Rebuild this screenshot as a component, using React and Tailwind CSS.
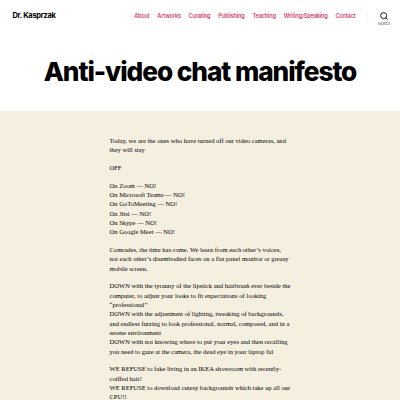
const links = ['About', 'Artworks', 'Curating', 'Publishing', 'Teaching', 'Writing/Speaking', 'Contact'];

const paragraphs = [
  ['Today, we are the ones who have turned off our video cameras, and', 'they will stay'],
  ['OFF'],
  [
    'On Zoom — NO!',
    'On Microsoft Teams — NO!',
    'On GoToMeeting — NO!',
    'On Jitsi — NO!',
    'On Skype — NO!',
    'On Google Meet — NO!',
  ],
  [
    'Comrades, the time has come. We learn from each other’s voices,',
    'not each other’s disembodied faces on a flat panel monitor or greasy',
    'mobile screen.',
  ],
  [
    'DOWN with the tyranny of the lipstick and hairbrush ever beside the',
    'computer, to adjust your looks to fit expectations of looking',
    '“professional”',
    'DOWN with the adjustment of lighting, tweaking of backgrounds,',
    'and endless futzing to look professional, normal, composed, and in a',
    'serene environment',
    'DOWN with not knowing where to put your eyes and then recalling',
    'you need to gaze at the camera, the dead eye in your laptop lid',
  ],
  [
    'WE REFUSE to fake living in an IKEA showroom with recently-',
    'coiffed hair!',
    'WE REFUSE to download cutesy backgrounds which take up all our',
    'CPU!!',
  ],
];

function Header() {
  return (
    <header className="flex h-8 items-center whitespace-nowrap pl-[12.5px]">
      <a className="text-[7.5px] font-bold leading-none tracking-[-0.32px] text-black">Dr. Kasprzak</a>
      <nav className="ml-auto flex gap-[7.8px] pt-[2px] text-[5.625px] font-medium leading-none tracking-[-0.15px] text-[#cd2653]">
        {links.map((label) => (
          <a key={label}>{label}</a>
        ))}
      </nav>
      <div className="ml-[11.5px] h-2.5 w-px bg-[#f8f7f4]" />
      <button className="flex w-[32px] flex-col items-center pt-[6px]">
        <svg className="size-[8px]" viewBox="0 0 23 23" fill="none" stroke="#111" strokeWidth="2.8">
          <circle cx="10.5" cy="10.5" r="8.7" />
          <path d="M16.5 16.5 22 22" />
        </svg>
        <span className="mt-[2px] text-[3.7px] font-medium leading-[4px] text-[#6d6d6d]">Search</span>
      </button>
    </header>
  );
}

export default function App() {
  return (
    <div className="h-[400px] w-[400px] overflow-hidden bg-white font-['Inter',sans-serif]">
      <Header />
      <div className="flex h-[79px] justify-center whitespace-nowrap pt-[24px]">
        <h1 className="text-[26.25px] font-extrabold leading-[32px] tracking-[-1.07px] text-black">
          Anti-video chat manifesto
        </h1>
      </div>
      <main className="h-[289px] overflow-hidden bg-[#f5efe0] pl-[109.5px] pt-[25px] font-['Liberation_Serif',serif] text-[6.56px] leading-[9.32px] text-black">
        {paragraphs.map((lines) => (
          <p key={lines[0]} className="mb-[8.4px] whitespace-nowrap">
            {lines.map((line) => (
              <span key={line} className="block">{line}</span>
            ))}
          </p>
        ))}
      </main>
    </div>
  );
}
